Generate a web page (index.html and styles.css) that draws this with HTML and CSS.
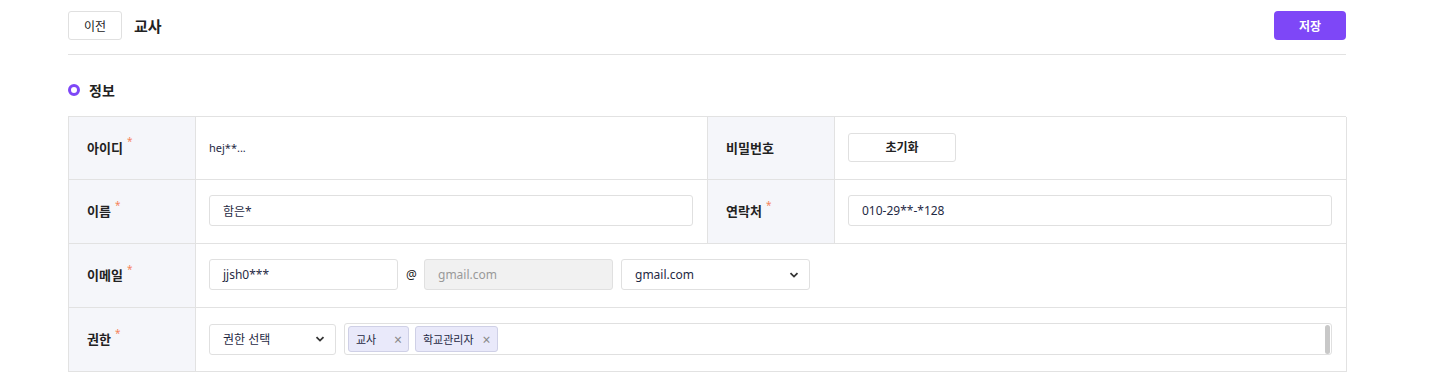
FILE: index.html
```html
<!DOCTYPE html>
<html lang="ko">
<head>
    <meta charset="UTF-8">
    <title>교사</title>
    <link rel="stylesheet" href="styles.css">
</head>
<body>
<div class="page">
    <div class="top-bar">
        <div class="top-left">
            <button class="btn-back">이전</button>
            <h1 class="page-title">교사</h1>
        </div>
        <button class="btn-save">저장</button>
    </div>

    <div class="section-title">
        <span class="dot"></span>
        정보
    </div>

    <div class="form-table">
        <div class="label">아이디<span class="req">*</span></div>
        <div class="value"><span class="plain">hej**...</span></div>
        <div class="label">비밀번호</div>
        <div class="value"><button class="btn-reset">초기화</button></div>

        <div class="label">이름<span class="req">*</span></div>
        <div class="value"><div class="input wide">함은*</div></div>
        <div class="label">연락처<span class="req">*</span></div>
        <div class="value"><div class="input wide">010-29**-*128</div></div>

        <div class="label">이메일<span class="req">*</span></div>
        <div class="value span3">
            <div class="input email">jjsh0***</div>
            <span class="at">@</span>
            <div class="input email disabled">gmail.com</div>
            <div class="input email select">gmail.com
                <svg class="chev" width="10" height="6" viewBox="0 0 10 6"><path d="M1.5 1.2 5 4.6 8.5 1.2" fill="none" stroke="#333" stroke-width="1.8"/></svg>
            </div>
        </div>

        <div class="label">권한<span class="req">*</span></div>
        <div class="value span3">
            <div class="input role select">권한 선택
                <svg class="chev" width="10" height="6" viewBox="0 0 10 6"><path d="M1.5 1.2 5 4.6 8.5 1.2" fill="none" stroke="#333" stroke-width="1.8"/></svg>
            </div>
            <div class="tag-box">
                <span class="tag">교사<span class="x">×</span></span>
                <span class="tag">학교관리자<span class="x">×</span></span>
                <span class="scroll-thumb"></span>
            </div>
        </div>
    </div>
</div>
</body>
</html>
```

FILE: styles.css
```css
body {
    margin: 0;
    font-family: "Noto Sans", "Noto Sans CJK KR", sans-serif;
    color: #222;
    background-color: #fff;
}
.page {
    width: 1278px;
    margin-left: 68px;
}
.top-bar {
    display: flex;
    justify-content: space-between;
    align-items: center;
    height: 55px;
    border-bottom: 1px solid #e2e2e2;
    box-sizing: border-box;
}
.top-left {
    display: flex;
    align-items: center;
    gap: 12px;
}
.btn-back {
    width: 54px;
    height: 29px;
    background-color: #fff;
    border: 1px solid #e0e0e0;
    border-radius: 3px;
    font-family: inherit;
    font-size: 12px;
    color: #222;
    padding: 0;
    margin-top: -3px;
}
.page-title {
    margin: -4px 0 0;
    font-size: 15px;
    font-weight: bold;
}
.btn-save {
    width: 72px;
    height: 29px;
    margin-top: -3px;
    background-color: #7e47f7;
    color: #fff;
    border: none;
    border-radius: 4px;
    font-family: inherit;
    font-size: 12px;
    font-weight: bold;
}
.section-title {
    display: flex;
    align-items: center;
    gap: 9px;
    height: 61px;
    box-sizing: border-box;
    padding-top: 8px;
    font-size: 14px;
    font-weight: bold;
}
.dot {
    width: 6px;
    height: 6px;
    border: 3px solid #7e47f7;
    border-radius: 50%;
}
.form-table {
    display: grid;
    grid-template-columns: 127px 512px 127px 512px;
    grid-template-rows: 63px 64px 64px 64px;
    border-top: 1px solid #e2e2e2;
    border-left: 1px solid #e2e2e2;
}
.label, .value {
    display: flex;
    align-items: center;
    border-bottom: 1px solid #e2e2e2;
    border-right: 1px solid #e2e2e2;
    box-sizing: border-box;
    padding-bottom: 2px;
}
.label {
    background-color: #f5f6fa;
    padding-left: 18px;
    font-size: 13px;
    font-weight: bold;
}
.value {
    padding-left: 13px;
    padding-right: 14px;
    gap: 8px;
}
.span3 {
    grid-column: span 3;
}
.req {
    color: #f6845a;
    font-size: 10px;
    font-weight: normal;
    margin-left: 4px;
    position: relative;
    top: -6px;
}
.plain {
    font-size: 11px;
    color: #1f2a44;
}
.btn-reset {
    width: 108px;
    height: 29px;
    background-color: #fff;
    border: 1px solid #e0e0e0;
    border-radius: 3px;
    font-family: inherit;
    font-size: 12px;
    font-weight: bold;
    color: #222;
    padding: 0;
    margin-top: 0;
}
.input {
    height: 31px;
    border: 1px solid #e0e0e0;
    border-radius: 3px;
    box-sizing: border-box;
    display: flex;
    align-items: center;
    padding-left: 13px;
    font-size: 12px;
    color: #1f2a44;
    background-color: #fff;
}
.wide {
    width: 484px;
}
.email {
    width: 189px;
}
.at {
    font-size: 12px;
    width: 10px;
}
.disabled {
    background-color: #f1f1f1;
    color: #999;
}
.select {
    justify-content: space-between;
    padding-right: 10px;
}
.chev {
    flex-shrink: 0;
}
.role {
    width: 127px;
    margin-top: 1px;
}
.tag-box {
    flex: 1;
    height: 32px;
    border: 1px solid #e0e0e0;
    border-radius: 3px;
    box-sizing: border-box;
    display: flex;
    align-items: center;
    gap: 6px;
    padding-left: 3px;
    position: relative;
    margin-top: 1px;
}
.tag {
    display: flex;
    align-items: center;
    justify-content: space-between;
    min-width: 61px;
    height: 26px;
    box-sizing: border-box;
    background-color: #e9e9fa;
    border: 1px solid #cfd0e6;
    border-radius: 3px;
    padding: 0 6px 0 7px;
    font-size: 11px;
    color: #1f2a44;
    gap: 9px;
}
.x {
    color: #888;
    font-size: 14px;
}
.scroll-thumb {
    position: absolute;
    right: 1px;
    top: 1px;
    width: 5px;
    height: 29px;
    background-color: #c8c8c8;
    border-radius: 3px;
}
```
